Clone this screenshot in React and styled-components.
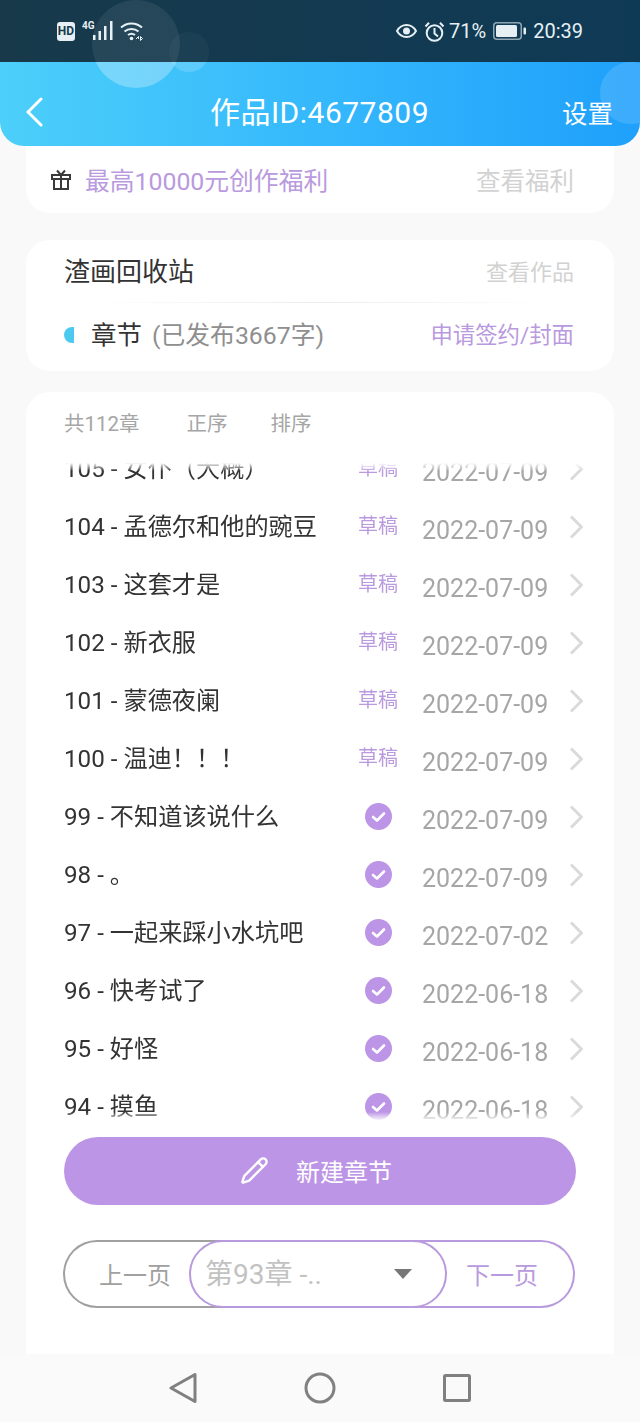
import React from 'react';
import styled, { createGlobalStyle } from 'styled-components';
import { Pencil } from 'lucide-react';

const PURPLE = '#bd95e6';
const PURPLE_TEXT = '#b99ade';
const FONT = 'Roboto, "Noto Sans CJK SC", sans-serif';
const STATUS_HEIGHT = 62;

const GlobalStyle = createGlobalStyle`
   html, body {
      margin: 0;
      padding: 0;
      background: #f9f9f9;
      font-family: ${FONT};
      overflow: hidden;
   }
`;

const Page = styled.div`
   position: relative;
   width: 640px;
   height: 1422px;
   display: flex;
   flex-direction: column;
   overflow: hidden;
   background: #f9f9f9;
`;

const Bubble = styled.div`
   position: absolute;
   left: ${({ x, r }) => x - r}px;
   top: ${({ y, r }) => y - r}px;
   width: ${({ r }) => r * 2}px;
   height: ${({ r }) => r * 2}px;
   border-radius: 50%;
   background: linear-gradient(
      180deg,
      rgba(255, 255, 255, ${({ dim }) => dim}) ${({ y, r }) => STATUS_HEIGHT - (y - r)}px,
      rgba(255, 255, 255, ${({ bright }) => bright}) ${({ y, r }) => STATUS_HEIGHT - (y - r)}px
   );
   z-index: 3;
   pointer-events: none;
`;

const StatusBar = styled.div`
   height: ${STATUS_HEIGHT}px;
   flex: none;
   display: flex;
   align-items: center;
   justify-content: space-between;
   box-sizing: border-box;
   padding: 0 57px;
   background: linear-gradient(90deg, #17394a, #0f3a56);
   color: #e6f0f4;
   font-size: 20px;
`;

const StatusGroup = styled.div`
   display: flex;
   align-items: center;
   gap: ${({ gap }) => gap}px;
`;

const HdBadge = styled.span`
   width: 18px;
   height: 19px;
   border-radius: 3px;
   background: #e6f0f4;
   color: #17394a;
   font-size: 12px;
   font-weight: 700;
   line-height: 19px;
   text-align: center;
`;

const Network = styled.div`
   display: flex;
   align-items: flex-start;
   height: 20px;
`;

const NetworkLabel = styled.span`
   font-size: 10px;
   font-weight: 700;
   line-height: 10px;
   width: 11px;
   white-space: nowrap;
`;

const Percent = styled.span`
   margin-left: -3px;
`;

const Header = styled.div`
   position: relative;
   z-index: 2;
   flex: none;
   height: 84px;
   box-sizing: border-box;
   padding: 16px 27px 0 26px;
   display: grid;
   grid-template-columns: 1fr auto 1fr;
   align-items: center;
   border-radius: 0 0 24px 24px;
   background: linear-gradient(90deg, #4ccff9 0%, #33b6fc 55%, #1fa0fb 100%);
   color: #fff;
`;

const Title = styled.div`
   font-size: 30px;
   line-height: 36px;
   letter-spacing: 0.5px;
   margin-top: 1px;
`;

const Settings = styled.div`
   font-size: 25.5px;
   justify-self: end;
   margin-bottom: 2px;
`;

const Card = styled.div`
   background: #fff;
   margin: 0 26px;
   border-radius: 24px;
`;

const BenefitCard = styled(Card)`
   margin-top: -30px;
   padding: 30px 40px 1px 25px;
   height: 97px;
   box-sizing: border-box;
   display: flex;
   align-items: center;
   justify-content: space-between;
`;

const BenefitLabel = styled.div`
   display: flex;
   align-items: center;
   gap: 14px;
   color: ${PURPLE_TEXT};
   font-size: 24.8px;
`;

const MutedLink = styled.span`
   color: #d2d2d2;
   font-size: ${({ size }) => size}px;
`;

const WorkCard = styled(Card)`
   margin-top: 27px;
   height: 131px;
   box-sizing: border-box;
   padding: 0 40px 6px 38px;
   display: flex;
   flex-direction: column;
`;

const WorkRow = styled.div`
   flex: 1;
   padding-bottom: 3px;
   display: flex;
   align-items: center;
   justify-content: space-between;
`;

const WorkName = styled.div`
   color: #333;
   font-size: 26px;
`;

const Divider = styled.div`
   height: 1px;
   flex: none;
   background: linear-gradient(90deg, #fff 5%, #ececec 50%, #fff 95%);
`;

const SectionLabel = styled.div`
   display: flex;
   align-items: center;
   font-size: 25.5px;
   color: #333;
`;

const SectionMark = styled.span`
   width: 10px;
   height: 16px;
   margin: 5px 17px 0 0;
   border-radius: 10px 0 0 10px;
   background: #4dc9f0;
`;

const SectionNote = styled.span`
   margin-left: 10px;
   font-size: 24.8px;
   color: #8f8f8f;
`;

const SignLink = styled.span`
   color: ${PURPLE_TEXT};
   font-size: 22.4px;
`;

const ChapterCard = styled(Card)`
   margin-top: 21px;
   flex: 1;
   min-height: 0;
   display: flex;
   flex-direction: column;
   border-radius: 24px 24px 0 0;
`;

const Toolbar = styled.div`
   flex: none;
   height: 68px;
   box-sizing: border-box;
   padding: 0 0 8px 38px;
   display: flex;
   align-items: center;
   color: #a6a6a6;
   font-size: 20.5px;
`;

const ToolbarItem = styled.span`
   margin-right: ${({ gap }) => gap}px;
`;

const ChapterViewport = styled.div`
   flex: none;
   height: 662px;
   overflow: hidden;
   -webkit-mask-image: linear-gradient(180deg, transparent 3px, #000 11px, #000 652px, transparent 661px);
   mask-image: linear-gradient(180deg, transparent 3px, #000 11px, #000 652px, transparent 661px);
`;

const ChapterList = styled.div`
   margin-top: -20px;
`;

const Row = styled.div`
   height: 58px;
   padding: 0 31px 0 38px;
   display: flex;
   align-items: center;
`;

const RowName = styled.div`
   flex: 1;
   padding-bottom: 6px;
   color: #333;
   font-size: 24.2px;
   white-space: nowrap;
`;

const RowStatus = styled.div`
   width: 40px;
   display: flex;
   justify-content: center;
   margin-right: 24px;
   padding-bottom: 2px;
`;

const DraftTag = styled.span`
   margin-bottom: 4px;
   color: ${PURPLE_TEXT};
   font-size: 20px;
   white-space: nowrap;
`;

const RowDate = styled.div`
   width: 127px;
   padding-top: 6px;
   color: #a6a6a6;
   font-size: 25px;
   white-space: nowrap;
`;

const RowArrow = styled.svg`
   width: 14px;
   height: 24px;
   margin-left: 20px;
`;

const NewButton = styled.div`
   flex: none;
   height: 68px;
   box-sizing: border-box;
   margin: 15px 38px 0;
   padding: 0 8px 2px 0;
   border-radius: 34px;
   background: ${PURPLE};
   color: #fff;
   font-size: 24px;
   display: flex;
   align-items: center;
   justify-content: center;
   gap: 27px;
`;

const Pager = styled.div`
   flex: none;
   margin: 35px 39px 0 37px;
   display: flex;
   height: 68px;
   font-size: 24px;
`;

const PagerButton = styled.div`
   box-sizing: border-box;
   display: flex;
   align-items: center;
   padding-bottom: 2px;
   background: #fff;
   border: 2px solid ${({ tone }) => tone};
   color: ${({ tone }) => tone};
`;

const PrevButton = styled(PagerButton)`
   flex: none;
   width: 160px;
   margin-right: -34px;
   padding-left: 34px;
   border-right: 0;
   border-radius: 34px 0 0 34px;
`;

const NextButton = styled(PagerButton)`
   flex: 1;
   min-width: 0;
   margin-left: -34px;
   padding-left: 53px;
   border-left: 0;
   border-radius: 0 34px 34px 0;
`;

const PageSelect = styled.div`
   position: relative;
   z-index: 1;
   flex: none;
   width: 258px;
   box-sizing: border-box;
   padding: 0 33px 4px 14px;
   display: flex;
   align-items: center;
   justify-content: space-between;
   background: #fff;
   border: 2px solid ${PURPLE_TEXT};
   border-radius: 34px;
   color: #c2c2c2;
   font-size: 28px;
   white-space: nowrap;
`;

const SelectCaret = styled.span`
   width: 0;
   height: 0;
   margin-top: 3px;
   border-left: 9px solid transparent;
   border-right: 9px solid transparent;
   border-top: 10px solid #777;
`;

const NavBar = styled.div`
   flex: none;
   height: 68px;
   background: #fafafa;
   display: flex;
   align-items: center;
   justify-content: center;
   gap: 107px;
   padding-right: 1px;
`;

const Signal = () => (
  <svg width="20" height="19" viewBox="0 0 20 19" fill="#e6f0f4">
    <rect x="0" y="14" width="2.500" height="5" />
    <rect x="5.500" y="10" width="2.500" height="9" />
    <rect x="11" y="5" width="2.500" height="14" />
    <rect x="17" y="0" width="2.500" height="19" />
  </svg>
);

const Wifi = () => (
  <svg width="23" height="20" viewBox="0 0 23 20" fill="none" stroke="#e6f0f4" strokeWidth="2">
    <path d="M1 6.500C7 1 16 1 22 6.500" />
    <path d="M4.500 10.500c4-3.400 10-3.400 14 0" />
    <path d="M8 14c2-1.500 5-1.500 7 0" />
    <circle cx="11.500" cy="17.500" r="1.800" fill="#e6f0f4" stroke="none" />
    <path d="M16 18l2.500-2.500v2.500M20.500 15.500v4l2-2z" strokeWidth="1" />
  </svg>
);

const Eye = () => (
  <svg width="21" height="16" viewBox="0 0 21 16" fill="none" stroke="#e6f0f4" strokeWidth="2">
    <path d="M1 8c4.500-8 14.500-8 19 0-4.500 8-14.500 8-19 0z" />
    <circle cx="10.500" cy="8" r="3.500" fill="#e6f0f4" stroke="none" />
  </svg>
);

const Alarm = () => (
  <svg width="21" height="21" viewBox="0 0 21 21" fill="none" stroke="#e6f0f4" strokeWidth="2">
    <circle cx="10.500" cy="12" r="7.800" />
    <path d="M10.500 7v5.500l3.500 3" />
    <path d="M1.500 5.500L5 1.800M19.500 5.500L16 1.800" />
  </svg>
);

const Battery = () => (
  <svg width="33" height="18" viewBox="0 0 33 18">
    <rect x="0.750" y="0.750" width="27.500" height="16.500" rx="3" fill="none" stroke="#e6f0f4" strokeOpacity="0.6" strokeWidth="1.500" />
    <rect x="3" y="3" width="21" height="12" rx="1.500" fill="#e6f0f4" />
    <rect x="30.500" y="5.500" width="2.500" height="7" rx="1" fill="#e6f0f4" />
  </svg>
);

const Gift = () => (
  <svg width="20" height="21" viewBox="0 0 20 21" fill="none" stroke="#3a3a3a" strokeWidth="2">
    <rect x="1" y="6" width="18" height="4" />
    <rect x="3" y="10" width="14" height="10" />
    <path d="M10 6v14" />
    <path d="M10 6L6 1.500M10 6l4-4.500" />
  </svg>
);

const CheckBadge = () => (
  <svg width="27" height="27" viewBox="0 0 27 27">
    <circle cx="13.500" cy="13.500" r="13.500" fill={PURPLE} />
    <path d="M8 14l4 3.500 7-7" fill="none" stroke="#fff" strokeWidth="2.600" strokeLinecap="round" strokeLinejoin="round" />
  </svg>
);

const chapters = [
  ['105 - 女仆（大概）', false, '2022-07-09'],
  ['104 - 孟德尔和他的豌豆', false, '2022-07-09'],
  ['103 - 这套才是', false, '2022-07-09'],
  ['102 - 新衣服', false, '2022-07-09'],
  ['101 - 蒙德夜阑', false, '2022-07-09'],
  ['100 - 温迪！！！', false, '2022-07-09'],
  ['99 - 不知道该说什么', true, '2022-07-09'],
  ['98 - 。', true, '2022-07-09'],
  ['97 - 一起来踩小水坑吧', true, '2022-07-02'],
  ['96 - 快考试了', true, '2022-06-18'],
  ['95 - 好怪', true, '2022-06-18'],
  ['94 - 摸鱼', true, '2022-06-18'],
];

const App = () => (
  <Page>
    <GlobalStyle />
    <Bubble x={136} y={44} r={44} dim={0.07} bright={0.28} />
    <Bubble x={189} y={52} r={20} dim={0.03} bright={0.16} />
    <Bubble x={631} y={93} r={31} dim={0} bright={0.13} />

    <StatusBar>
      <StatusGroup gap={7}>
        <HdBadge>HD</HdBadge>
        <Network>
          <NetworkLabel>4G</NetworkLabel>
          <Signal />
        </Network>
        <Wifi />
      </StatusGroup>
      <StatusGroup gap={7}>
        <Eye />
        <Alarm />
        <Percent>71%</Percent>
        <Battery />
        <span>20:39</span>
      </StatusGroup>
    </StatusBar>

    <Header>
      <svg width="18" height="30" viewBox="0 0 18 30" fill="none" stroke="#fff" strokeWidth="3" strokeLinecap="round">
        <path d="M15 2L2 15l13 13" />
      </svg>
      <Title>作品ID:4677809</Title>
      <Settings>设置</Settings>
    </Header>

    <BenefitCard>
      <BenefitLabel>
        <Gift />
        最高10000元创作福利
      </BenefitLabel>
      <MutedLink size={24.5}>查看福利</MutedLink>
    </BenefitCard>

    <WorkCard>
      <WorkRow>
        <WorkName>渣画回收站</WorkName>
        <MutedLink size={22}>查看作品</MutedLink>
      </WorkRow>
      <Divider />
      <WorkRow>
        <SectionLabel>
          <SectionMark />
          章节
          <SectionNote>(已发布3667字)</SectionNote>
        </SectionLabel>
        <SignLink>申请签约/封面</SignLink>
      </WorkRow>
    </WorkCard>

    <ChapterCard>
      <Toolbar>
        <ToolbarItem gap={47}>共112章</ToolbarItem>
        <ToolbarItem gap={43}>正序</ToolbarItem>
        <ToolbarItem>排序</ToolbarItem>
      </Toolbar>
      <ChapterViewport>
        <ChapterList>
          {chapters.map(([name, published, date]) => (
            <Row key={name}>
              <RowName>{name}</RowName>
              <RowStatus>{published ? <CheckBadge /> : <DraftTag>草稿</DraftTag>}</RowStatus>
              <RowDate>{date}</RowDate>
              <RowArrow viewBox="0 0 14 24" fill="none" stroke="#dadada" strokeWidth="3">
                <path d="M2 1.500L12.500 12 2 22.500" />
              </RowArrow>
            </Row>
          ))}
        </ChapterList>
      </ChapterViewport>
      <NewButton>
        <Pencil size={29} strokeWidth={2} />
        新建章节
      </NewButton>
      <Pager>
        <PrevButton tone="#a0a0a0">上一页</PrevButton>
        <PageSelect>
          第93章 -..
          <SelectCaret />
        </PageSelect>
        <NextButton tone={PURPLE_TEXT}>下一页</NextButton>
      </Pager>
    </ChapterCard>

    <NavBar>
      <svg width="28" height="32" viewBox="0 0 28 32" fill="none" stroke="#808080" strokeWidth="3" strokeLinejoin="round">
        <path d="M26 2.500v27L2 16z" />
      </svg>
      <svg width="32" height="32" viewBox="0 0 32 32" fill="none" stroke="#808080" strokeWidth="3">
        <circle cx="16" cy="16" r="14" />
      </svg>
      <svg width="28" height="28" viewBox="0 0 28 28" fill="none" stroke="#808080" strokeWidth="3" strokeLinejoin="round">
        <rect x="1.500" y="1.500" width="25" height="25" rx="1" />
      </svg>
    </NavBar>
  </Page>
);

export default App;
